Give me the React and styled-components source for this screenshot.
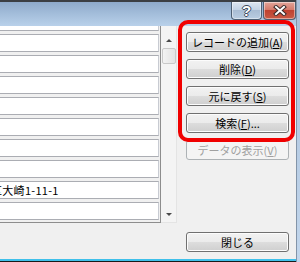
import React from "react";
import styled, { createGlobalStyle } from "styled-components";

const GlobalStyle = createGlobalStyle`
  html, body {
    margin: 0;
    padding: 0;
    background: #f0f0f0;
  }
  body {
    font-family: "Noto Sans CJK JP", "Liberation Sans", sans-serif;
    font-size: 11px;
  }
`;

const buttons = [
	{ label: "レコードの追加", key: "A" },
	{ label: "削除", key: "D" },
	{ label: "元に戻す", key: "S" },
	{ label: "検索", key: "F", tail: "..." },
	{ label: "データの表示", key: "V", disabled: true },
];

const fields = ["", "", "", "", "", "", "", "", "区大崎1-11-1", ""];

export default function App(){
	return(
		<>
			<GlobalStyle/>
			<Window>
				<Main>
					<TitleBar>
						<CaptionButton kind="help"><HelpMark>?</HelpMark></CaptionButton>
						<CaptionButton kind="close">
							<svg width="14" height="11" viewBox="0 0 14 11">
								<path d="M3 2 L11 9 M11 2 L3 9" stroke="#3a2a2a" strokeWidth="4" strokeLinecap="square"/>
								<path d="M3 2 L11 9 M11 2 L3 9" stroke="#ffffff" strokeWidth="2" strokeLinecap="square"/>
							</svg>
						</CaptionButton>
					</TitleBar>
					<Body>
						<ListPane>
							<FieldColumn>
								{fields.map((text, i) =>
									<Field key={i}>{text && <FieldText>{text}</FieldText>}</Field>
								)}
							</FieldColumn>
						</ListPane>
						<ScrollBar>
							<Arrow dir="up"/>
							<Thumb/>
							<Arrow dir="down"/>
						</ScrollBar>
						<ButtonColumn>
							{buttons.map(b =>
								<Button key={b.key} disabled={b.disabled}>
									{b.label}(<u>{b.key}</u>){b.tail}
								</Button>
							)}
							<CloseButton>閉じる</CloseButton>
						</ButtonColumn>
						<Highlight/>
					</Body>
					<BottomEdge/>
				</Main>
				<FrameEdge/>
			</Window>
		</>
	);
}

const Window = styled.div`
    width: 300px;
    height: 262px;
    display: flex;
    overflow: hidden;
    background: #f0f0f0;
`;

const Main = styled.div`
    width: 296px;
    display: flex;
    flex-direction: column;
`;

const FrameEdge = styled.div`
    width: 3px;
    border-left: 1px solid #8394a8;
    background: linear-gradient(#a9c0da, #c2d6ec);
`;

const TitleBar = styled.div`
    height: 24px;
    border-top: 2px solid #3b3f44;
    background: linear-gradient(#8eaacb, #b9d1ea);
    display: flex;
    justify-content: flex-end;
    align-items: flex-start;
    gap: 1px;
`;

const CaptionButton = styled.div`
    width: ${props => props.kind === "close" ? "31px" : "29px"};
    height: 17px;
    border: 1px solid #4d5f73;
    border-top: none;
    border-radius: 0 0 4px 4px;
    display: flex;
    justify-content: center;
    align-items: center;
    box-shadow: inset 0 0 0 1px rgba(255,255,255,0.45);
    background: ${props => props.kind === "close"
		? "linear-gradient(#e2a59a 0%, #d47a6b 45%, #c0412f 50%, #c85a45 100%)"
		: "linear-gradient(#dde7f2 0%, #c4d4e6 45%, #a9bdd4 50%, #b9cde2 100%)"};
`;

const HelpMark = styled.span`
    font-family: "Liberation Sans", sans-serif;
    font-weight: bold;
    font-size: 15px;
    line-height: 15px;
    color: #ffffff;
    text-shadow: -1px 0 #3d4a5a, 1px 0 #3d4a5a, 0 -1px #3d4a5a, 0 1px #3d4a5a;
`;

const Body = styled.div`
    position: relative;
    flex: 1;
    display: flex;
    background: #f0f0f0;
`;

const ListPane = styled.div`
    width: 160px;
    height: 196px;
    border-right: 1px solid #8d8d8d;
    border-bottom: 1px solid #8d8d8d;
    overflow: hidden;
`;

const FieldColumn = styled.div`
    margin-top: -13px;
    display: flex;
    flex-direction: column;
    gap: 3px;
`;

const Field = styled.div`
    width: 158px;
    height: 16px;
    box-sizing: content-box;
    border: 1px solid #abadb3;
    border-left: none;
    border-right-color: #c8cbd2;
    background: #ffffff;
    overflow: hidden;
    white-space: nowrap;
    display: flex;
    align-items: center;
`;

const FieldText = styled.span`
    margin-left: -9px;
    font-size: 11px;
    letter-spacing: 0.3px;
    line-height: 16px;
    color: #000000;
`;

const ScrollBar = styled.div`
    width: 16px;
    height: 197px;
    box-sizing: border-box;
    padding-top: 13px;
    border-right: 1px solid #e4e4e4;
    border-bottom: 1px solid #e4e4e4;
    background: #f4f4f4;
    display: flex;
    flex-direction: column;
    align-items: center;
`;

const Arrow = styled.div`
    width: 0;
    height: 0;
    border-left: 3px solid transparent;
    border-right: 3px solid transparent;
    ${props => props.dir === "up"
		? "border-bottom: 3px solid #4a4a4a;"
		: "border-top: 3px solid #4a4a4a; margin-top: auto; margin-bottom: 6px;"}
`;

const Thumb = styled.div`
    width: 14px;
    height: 16px;
    margin-top: 6px;
    box-sizing: border-box;
    border: 1px solid #c9c9c9;
    border-radius: 2px;
    background: linear-gradient(90deg, #f3f3f3, #e2e2e2);
`;

const ButtonColumn = styled.div`
    display: flex;
    flex-direction: column;
    gap: 7px;
    margin-left: 9px;
    padding: 6px 0 7px;
`;

const Button = styled.button`
    width: 103px;
    height: 20px;
    padding: 0;
    font-family: "Noto Sans CJK JP", "Liberation Sans", sans-serif;
    font-size: 11px;
    line-height: 18px;
    color: ${props => props.disabled ? "#a0a0a0" : "#000000"};
    border: 1px solid ${props => props.disabled ? "#adb2b5" : "#707070"};
    border-radius: 3px;
    background: ${props => props.disabled
		? "#f4f4f4"
		: "linear-gradient(#f2f2f2 0%, #ebebeb 50%, #dddddd 50%, #cfcfcf 100%)"};
    box-shadow: ${props => props.disabled ? "none" : "inset 0 0 0 1px #fcfcfc"};

    u {
        text-decoration-thickness: 1px;
        text-underline-offset: 1px;
    }
`;

const CloseButton = styled(Button)`
    margin-top: auto;
`;

const Highlight = styled.div`
    position: absolute;
    left: 178px;
    top: -6px;
    width: 117px;
    height: 122px;
    box-sizing: border-box;
    border: 4px solid #f00000;
    border-radius: 10px;
    pointer-events: none;
`;

const BottomEdge = styled.div`
    height: 1px;
    border-top: 2px solid #3fc0ea;
    background: #1a1a1a;
`;
